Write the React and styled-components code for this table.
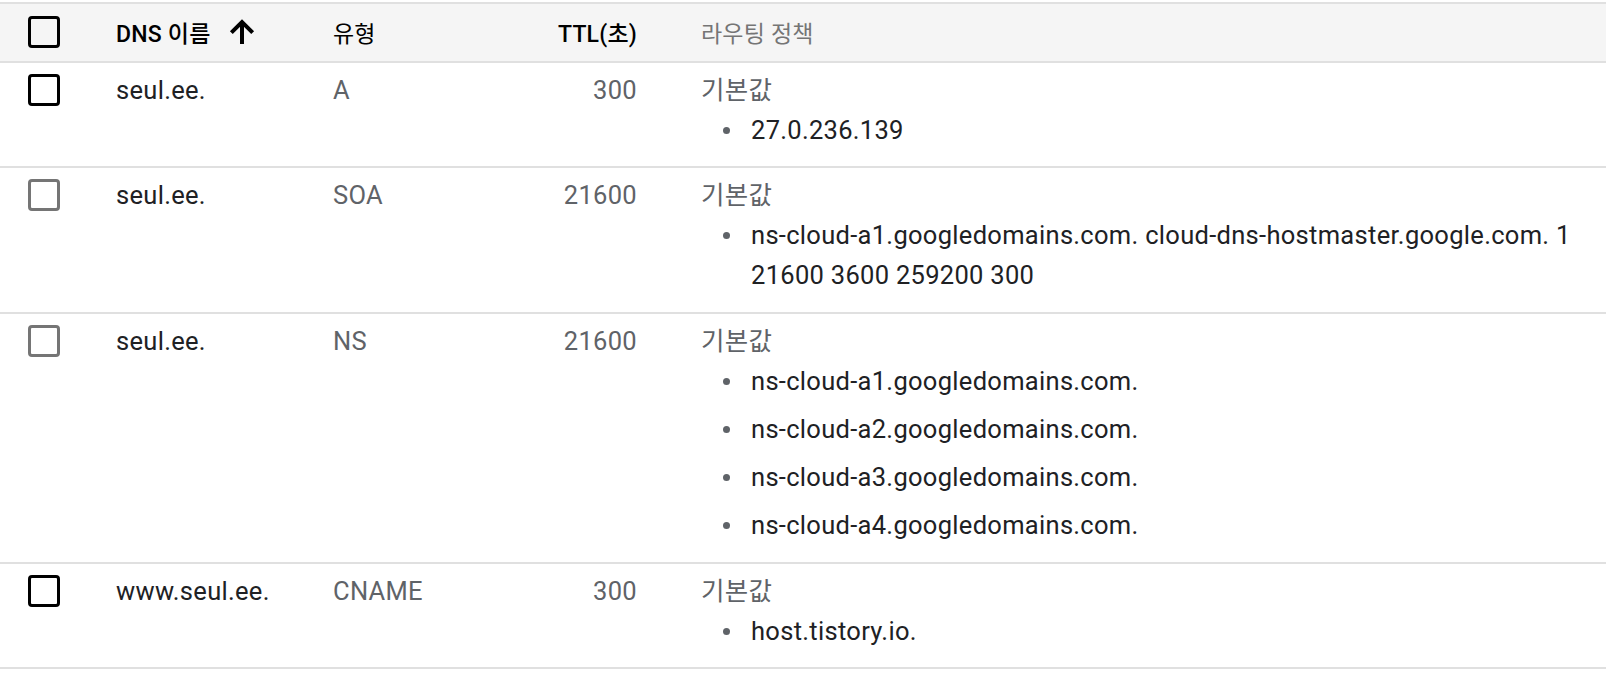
import React from 'react';
import styled, { createGlobalStyle } from 'styled-components';

const GlobalStyle = createGlobalStyle`
  html, body {
    margin: 0;
    padding: 0;
    background: #fff;
  }
  body {
    font-family: Roboto, "Noto Sans CJK KR", sans-serif;
    color: #202124;
  }
`;

const COLS = '116px 217px 170px 134px 1fr';

const Table = styled.div`
  margin-top: 2px;
  border-top: 2px solid #e0e0e0;
`;

const HeaderRow = styled.div`
  display: grid;
  grid-template-columns: ${COLS};
  align-items: center;
  height: 55px;
  padding-bottom: 2px;
  background: #f5f5f5;
  border-bottom: 2px solid #e0e0e0;
  font-size: 23px;
  letter-spacing: 0.2px;
`;

const Row = styled.div`
  display: grid;
  grid-template-columns: ${COLS};
  align-items: start;
  padding: 7px 0 8px;
  border-bottom: 2px solid #e0e0e0;
  font-size: 25.5px;
  letter-spacing: 0.3px;
  line-height: 40px;
`;

const CheckCell = styled.div`
  padding-left: 28px;
  display: flex;
  align-items: center;
  height: ${p => (p.$head ? 'auto' : '40px')};
`;

const Box = styled.span`
  box-sizing: border-box;
  width: 32px;
  height: 32px;
  border: 3px solid ${p => (p.$muted ? '#757575' : '#000')};
  border-radius: 4px;
  display: inline-block;
`;

const HeadCell = styled.div`
  display: flex;
  align-items: center;
  justify-content: ${p => (p.$right ? 'flex-end' : 'flex-start')};
  font-weight: ${p => (p.$bold ? 500 : 400)};
  color: ${p => (p.$muted ? '#757575' : '#000')};
  padding-left: ${p => (p.$pad ? '64px' : '0')};
`;

const SortIcon = styled.svg`
  width: 32px;
  height: 32px;
  margin-left: 15px;
  fill: none;
  stroke: #000;
  stroke-width: 3;
`;

const Cell = styled.div`
  color: ${p => (p.$muted ? '#5f6368' : '#202124')};
  text-align: ${p => (p.$right ? 'right' : 'left')};
  padding-left: ${p => (p.$pad ? '64px' : '0')};
  padding-right: ${p => (p.$pad ? '16px' : '0')};
`;

const PolicyName = styled.div`
  color: #5f6368;
`;

const Values = styled.ul`
  margin: 0;
  padding: 0 0 0 50px;
  list-style: none;
`;

const Value = styled.li`
  position: relative;
  color: #202124;
  margin-bottom: 8.3px;

  &::before {
    content: '';
    position: absolute;
    left: -28px;
    top: 17px;
    width: 7px;
    height: 7px;
    border-radius: 50%;
    background: #5f6368;
  }
`;

const records = [
  { name: 'seul.ee.', type: 'A', ttl: 300, muted: false, values: ['27.0.236.139'] },
  {
    name: 'seul.ee.',
    type: 'SOA',
    ttl: 21600,
    muted: true,
    values: ['ns-cloud-a1.googledomains.com. cloud-dns-hostmaster.google.com. 1 21600 3600 259200 300'],
  },
  {
    name: 'seul.ee.',
    type: 'NS',
    ttl: 21600,
    muted: true,
    values: [
      'ns-cloud-a1.googledomains.com.',
      'ns-cloud-a2.googledomains.com.',
      'ns-cloud-a3.googledomains.com.',
      'ns-cloud-a4.googledomains.com.',
    ],
  },
  { name: 'www.seul.ee.', type: 'CNAME', ttl: 300, muted: false, values: ['host.tistory.io.'] },
];

export default function App() {
  return (
    <>
      <GlobalStyle />
      <Table>
        <HeaderRow>
          <CheckCell $head>
            <Box />
          </CheckCell>
          <HeadCell $bold>
            DNS 이름
            <SortIcon viewBox="0 0 24 24">
              <path d="M12 21V4.5M4 12.5l8-8 8 8" />
            </SortIcon>
          </HeadCell>
          <HeadCell>유형</HeadCell>
          <HeadCell $bold $right>TTL(초)</HeadCell>
          <HeadCell $muted $pad>라우팅 정책</HeadCell>
        </HeaderRow>
        {records.map((r, i) => (
          <Row key={i}>
            <CheckCell>
              <Box $muted={r.muted} />
            </CheckCell>
            <Cell>{r.name}</Cell>
            <Cell $muted>{r.type}</Cell>
            <Cell $muted $right>{r.ttl}</Cell>
            <Cell $pad>
              <PolicyName>기본값</PolicyName>
              <Values>
                {r.values.map(v => (
                  <Value key={v}>{v}</Value>
                ))}
              </Values>
            </Cell>
          </Row>
        ))}
      </Table>
    </>
  );
}
